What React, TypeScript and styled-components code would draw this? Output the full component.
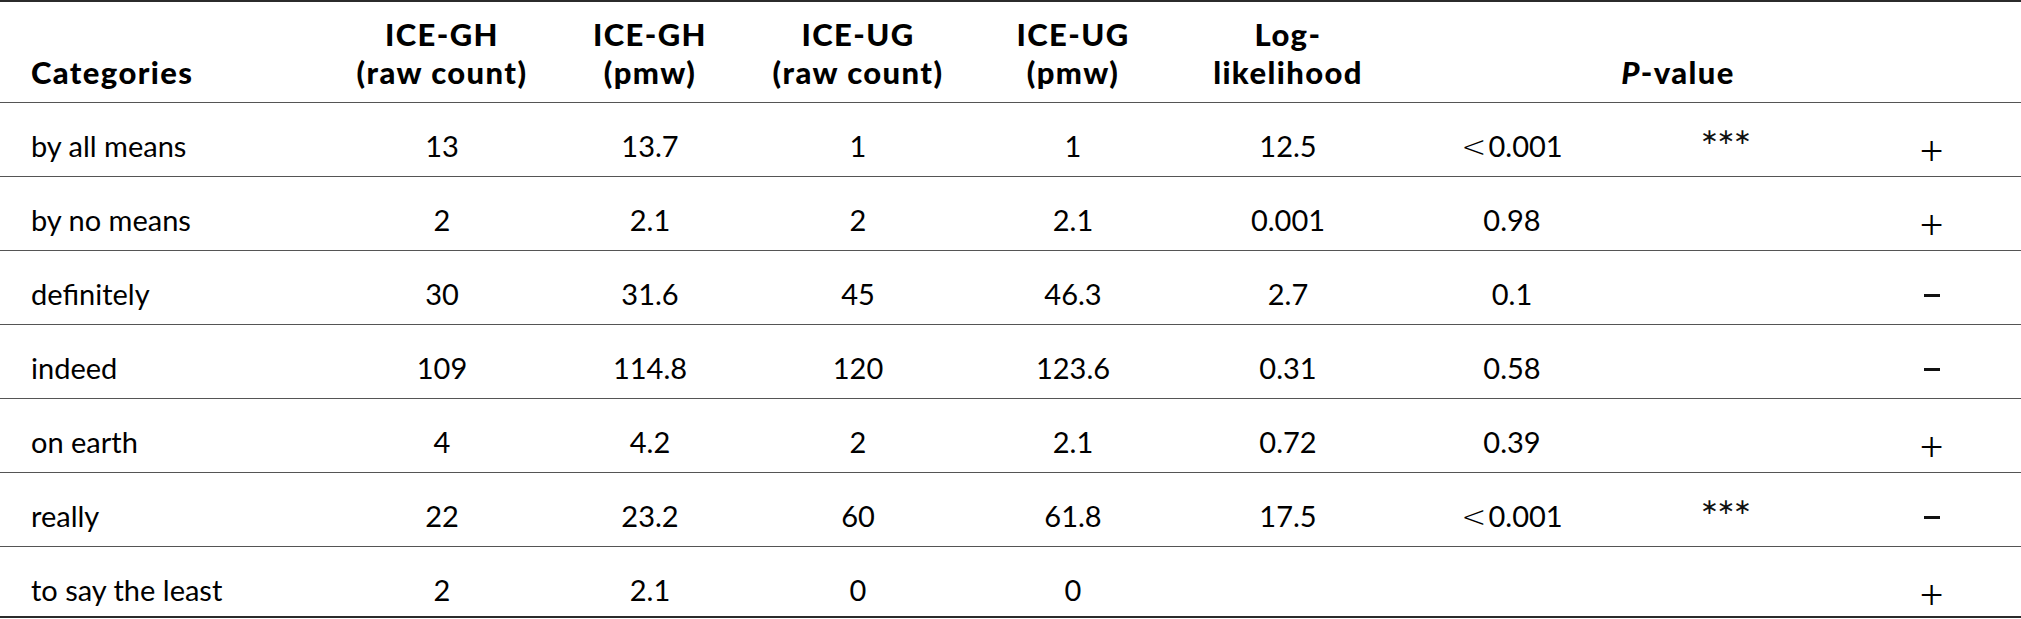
import styled, { createGlobalStyle } from "styled-components";

const GlobalStyle = createGlobalStyle`
    html, body {
        margin: 0;
        padding: 0;
        background: #ffffff;
    }
    body {
        font-family: Lato, "Open Sans", "Liberation Sans", sans-serif;
        color: #000000;
    }
`;

const COLUMNS = "340px 204px 212px 204px 226px 204px 244px 182px 1fr";

const Table = styled.div`
    width: 2021px;
    border-top: 2px solid #2b2b2b;
    border-bottom: 2px solid #2b2b2b;
`;

const HeadRow = styled.div`
    display: grid;
    grid-template-columns: ${COLUMNS};
    align-items: end;
    height: 101px;
    box-sizing: border-box;
    padding-bottom: 11px;
    border-bottom: 1px solid #555555;
    font-weight: 900;
    font-size: 31px;
    line-height: 38px;
    letter-spacing: 1.4px;
`;

const HeadCell = styled.div<{ $left?: boolean }>`
    text-align: ${(p) => (p.$left ? "left" : "center")};
    padding-left: ${(p) => (p.$left ? "31px" : "0")};
    white-space: nowrap;
`;

const PValueHead = styled.div`
    grid-column: 7 / 9;
    text-align: center;
    padding-left: 150px;
    i {
        font-style: italic;
    }
`;

const BodyRow = styled.div<{ $last?: boolean }>`
    display: grid;
    grid-template-columns: ${COLUMNS};
    align-items: start;
    height: ${(p) => (p.$last ? "69px" : "74px")};
    box-sizing: border-box;
    padding-top: 24px;
    border-bottom: ${(p) => (p.$last ? "none" : "1px solid #555555")};
    font-size: 29px;
    line-height: 38px;
`;

const Cell = styled.div<{ $left?: boolean }>`
    text-align: ${(p) => (p.$left ? "left" : "center")};
    padding-left: ${(p) => (p.$left ? "31px" : "0")};
    white-space: nowrap;
`;

const LessThan = styled.span`
    font-family: "DejaVu Sans", sans-serif;
    font-weight: 200;
    font-size: 30px;
    margin-right: 2px;
`;

const Stars = styled.div`
    text-align: center;
    font-family: "DejaVu Sans", sans-serif;
    font-size: 22px;
    line-height: 20px;
    letter-spacing: -2px;
    color: #111111;
`;

const Sign = styled.div<{ $plus?: boolean }>`
    display: flex;
    justify-content: center;
    align-items: center;
    height: 38px;
    padding-left: 26px;
    padding-top: ${(p) => (p.$plus ? "5px" : "0")};
    font-family: "Liberation Serif", serif;
    font-size: 42px;
`;

const MinusBar = styled.span`
    display: block;
    width: 16px;
    height: 3px;
    margin-top: 2px;
    background: #111111;
`;

interface RowData {
    category: string;
    ghRaw: string;
    ghPmw: string;
    ugRaw: string;
    ugPmw: string;
    ll: string;
    p: string;
    lessThan?: boolean;
    stars?: boolean;
    sign: "+" | "-";
}

const rows: RowData[] = [
    { category: "by all means", ghRaw: "13", ghPmw: "13.7", ugRaw: "1", ugPmw: "1", ll: "12.5", p: "0.001", lessThan: true, stars: true, sign: "+" },
    { category: "by no means", ghRaw: "2", ghPmw: "2.1", ugRaw: "2", ugPmw: "2.1", ll: "0.001", p: "0.98", sign: "+" },
    { category: "definitely", ghRaw: "30", ghPmw: "31.6", ugRaw: "45", ugPmw: "46.3", ll: "2.7", p: "0.1", sign: "-" },
    { category: "indeed", ghRaw: "109", ghPmw: "114.8", ugRaw: "120", ugPmw: "123.6", ll: "0.31", p: "0.58", sign: "-" },
    { category: "on earth", ghRaw: "4", ghPmw: "4.2", ugRaw: "2", ugPmw: "2.1", ll: "0.72", p: "0.39", sign: "+" },
    { category: "really", ghRaw: "22", ghPmw: "23.2", ugRaw: "60", ugPmw: "61.8", ll: "17.5", p: "0.001", lessThan: true, stars: true, sign: "-" },
    { category: "to say the least", ghRaw: "2", ghPmw: "2.1", ugRaw: "0", ugPmw: "0", ll: "", p: "", sign: "+" },
];

const App = () => {
    return (
        <>
            <GlobalStyle />
            <Table>
                <HeadRow>
                    <HeadCell $left>Categories</HeadCell>
                    <HeadCell>
                        ICE-GH
                        <br />
                        (raw count)
                    </HeadCell>
                    <HeadCell>
                        ICE-GH
                        <br />
                        (pmw)
                    </HeadCell>
                    <HeadCell>
                        ICE-UG
                        <br />
                        (raw count)
                    </HeadCell>
                    <HeadCell>
                        ICE-UG
                        <br />
                        (pmw)
                    </HeadCell>
                    <HeadCell>
                        Log-
                        <br />
                        likelihood
                    </HeadCell>
                    <PValueHead>
                        <i>P</i>-value
                    </PValueHead>
                    <HeadCell />
                </HeadRow>
                {rows.map((r, i) => (
                    <BodyRow key={r.category} $last={i === rows.length - 1}>
                        <Cell $left>{r.category}</Cell>
                        <Cell>{r.ghRaw}</Cell>
                        <Cell>{r.ghPmw}</Cell>
                        <Cell>{r.ugRaw}</Cell>
                        <Cell>{r.ugPmw}</Cell>
                        <Cell>{r.ll}</Cell>
                        <Cell>
                            {r.lessThan && <LessThan>&lt;</LessThan>}
                            {r.p}
                        </Cell>
                        <Stars>{r.stars ? "∗∗∗" : ""}</Stars>
                        <Sign $plus={r.sign === "+"}>
                            {r.sign === "+" ? "+" : <MinusBar aria-label="−" />}
                        </Sign>
                    </BodyRow>
                ))}
            </Table>
        </>
    );
};

export default App;
